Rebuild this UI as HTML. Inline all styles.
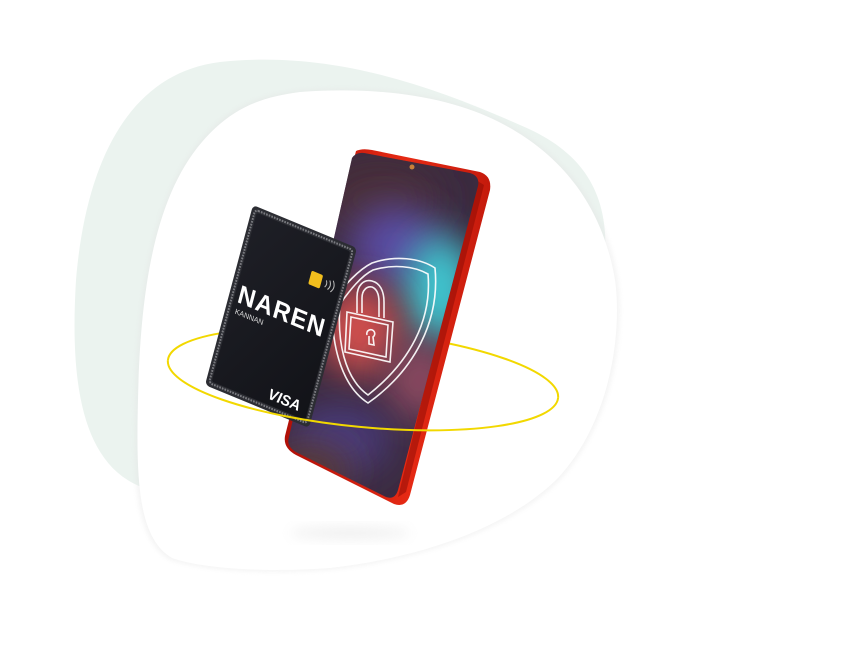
<!DOCTYPE html>
<html><head><meta charset="utf-8"><style>
html,body{margin:0;padding:0;background:#fff;width:850px;height:647px;overflow:hidden}
svg{display:block}
</style></head><body>
<svg width="850" height="647" viewBox="0 0 850 647" xmlns="http://www.w3.org/2000/svg">
<defs>
<filter id="sh" x="-20%" y="-20%" width="140%" height="140%"><feGaussianBlur stdDeviation="2"/></filter>
<filter id="bl" x="-50%" y="-50%" width="200%" height="200%"><feGaussianBlur stdDeviation="18"/></filter>
<filter id="bl2" x="-50%" y="-50%" width="200%" height="200%"><feGaussianBlur stdDeviation="6"/></filter>
<linearGradient id="red" x1="0" y1="0" x2="1" y2="0"><stop offset="0" stop-color="#b01008"/><stop offset="0.6" stop-color="#e62a14"/><stop offset="1" stop-color="#c41a0c"/></linearGradient>
<linearGradient id="card" x1="0" y1="0" x2="1" y2="1"><stop offset="0" stop-color="#1e1f26"/><stop offset="1" stop-color="#121318"/></linearGradient>
<clipPath id="scr"><path d="M352 158 Q356 152 364 153 L470 173 Q480 176 478 186 L398 490 Q395 500 386 497 L296 452 Q286 446 289 437 Z"/></clipPath>
</defs>
<!-- green blob -->
<path d="M220 62 C330 50 430 85 520 125 C580 150 610 190 605 260 C600 300 560 330 500 380 C400 440 250 500 150 490 C80 470 70 380 76 280 C86 160 130 73 220 62 Z" fill="#ebf3ef"/>
<!-- white blob -->
<path d="M300 90 C380 84 450 95 500 120 C560 150 605 200 618 280 C625 330 615 420 560 480 C510 530 420 560 330 570 C260 575 200 570 170 560 C135 540 133 480 135 400 C137 300 150 200 200 140 C230 105 260 95 300 90 Z" fill="#e2e2e2" filter="url(#sh)" opacity="0.35"/>
<path d="M300 92 C380 86 450 97 499 122 C558 152 602 202 615 280 C622 330 612 420 558 478 C508 528 420 558 330 568 C260 573 200 568 172 558 C138 538 136 480 138 400 C140 300 152 200 202 142 C232 107 262 97 300 92 Z" fill="#fff"/>
<!-- reflection under phone -->
<ellipse cx="350" cy="533" rx="60" ry="6" fill="#ddd" opacity="0.45" filter="url(#bl2)"/>
<!-- ring back part -->
<g transform="rotate(5.5 363 379)">
<path d="M167 379 A196 48 0 0 1 559 379" fill="none" stroke="#f2d800" stroke-width="2"/>
</g>
<!-- phone body -->
<path d="M356 151 Q362 148 372 150 L480 172 Q492 176 490 190 L410 495 Q406 508 394 504 L296 455 Q283 448 285 436 Z" fill="url(#red)"/>
<path d="M476 180 L484 185 L406 492 L398 497 Z" fill="#8a0a04" opacity="0.5"/>
<!-- screen -->
<g clip-path="url(#scr)">
<rect x="280" y="145" width="210" height="360" fill="#3b2b40"/>
<ellipse cx="380" cy="200" rx="60" ry="40" fill="#4a2f38" filter="url(#bl)"/>
<ellipse cx="395" cy="245" rx="45" ry="40" fill="#5a4aa0" filter="url(#bl)"/>
<ellipse cx="440" cy="290" rx="35" ry="55" fill="#3fc6d0" filter="url(#bl)"/>
<ellipse cx="360" cy="330" rx="40" ry="45" fill="#d0504e" filter="url(#bl)"/>
<ellipse cx="420" cy="380" rx="35" ry="40" fill="#8a4a60" filter="url(#bl)"/>
<ellipse cx="340" cy="440" rx="50" ry="35" fill="#4a3a7a" filter="url(#bl)"/>
<ellipse cx="310" cy="470" rx="40" ry="25" fill="#5a3a30" filter="url(#bl)"/>
</g>
<circle cx="412" cy="167" r="2.5" fill="#c9803a"/>
<!-- shield & lock -->
<g fill="none" stroke="#fff" stroke-width="1.6" opacity="0.92">
<path d="M372 263 C395 255 420 258 435 268 C440 320 415 370 368 403 C340 385 330 340 333 300 C345 285 358 270 372 263 Z"/>
<path d="M373 270 C393 264 414 266 428 274 C432 320 410 362 368 395 C344 378 337 340 340 304 C350 290 361 276 373 270 Z"/>
<path d="M357 313 L357 297 C357 285 364 279 372 281 C380 283 384 291 384 302 L384 318"/>
<path d="M362 313 L362 298 C362 290 367 286 372 287 C377 289 379 294 379 302 L379 317"/>
<path d="M347 312 L393 322 L390 362 L345 352 Z"/>
<path d="M351 317 L388 325 L386 357 L349 349 Z"/>
<path d="M367 335 a4 4 0 1 1 6 2 l1 8 l-5 -1 l0 -8"/>
</g>
<!-- card -->
<g transform="matrix(1.04 0.43 -0.3 1.125 253 205)">
<rect x="0" y="0" width="100" height="160" rx="4" fill="#2c2d33"/>
<rect x="3" y="3" width="94" height="154" rx="3" fill="none" stroke="#7a7b80" stroke-width="1.8" stroke-dasharray="1.5 1"/>
<rect x="5" y="5" width="90" height="150" rx="2" fill="url(#card)"/>
<rect x="66" y="33" width="11" height="12" rx="1.5" fill="#f1be1d"/>
<path d="M81 36 q2 3 0 6 M84 35 q3 4 0 8 M87 34 q4 5 0 10" fill="none" stroke="#bbb" stroke-width="0.9"/>
<text x="8" y="83" font-family="Liberation Sans, sans-serif" font-weight="bold" font-size="22" fill="#fff" letter-spacing="1">NAREN</text>
<text x="9" y="93" font-family="Liberation Sans, sans-serif" font-size="6.5" fill="#ddd">KANNAN</text>
<text x="57" y="150" font-family="Liberation Sans, sans-serif" font-weight="bold" font-style="italic" font-size="13" fill="#fff">VISA</text>
</g>
<!-- ring front part -->
<g transform="rotate(5.5 363 379)">
<path d="M167 379 A196 48 0 0 0 559 379" fill="none" stroke="#f2d800" stroke-width="2"/>
</g>
</svg>
</body></html>
